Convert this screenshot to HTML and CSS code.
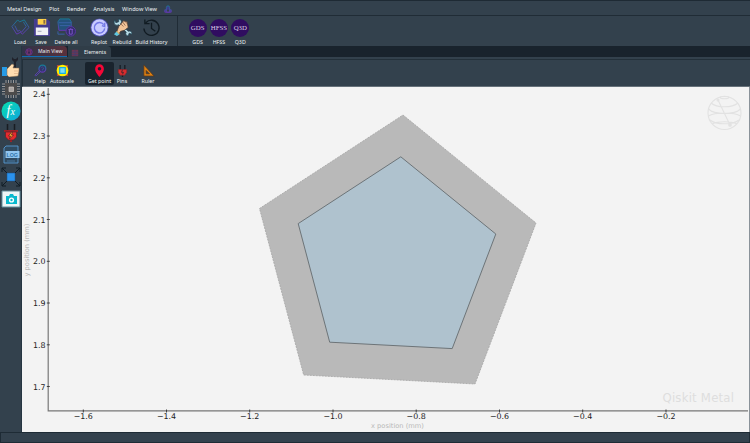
FILE: index.html
```html
<!DOCTYPE html>
<html lang="en">
<head>
<meta charset="utf-8">
<title>Qiskit Metal</title>
<link rel="stylesheet" href="styles.css">
</head>
<body>
<svg class="defs" width="0" height="0">
  <defs>
    <linearGradient id="cool" x1="0" y1="0" x2="0" y2="1"><stop offset="0" stop-color="#147d94"/><stop offset="1" stop-color="#6736b5"/></linearGradient>
    <linearGradient id="fx" x1="0" y1="0" x2="1" y2="1"><stop offset="0" stop-color="#06e0ac"/><stop offset="1" stop-color="#10a5df"/></linearGradient>
  </defs>
</svg>
<div class="app">
  <nav class="menubar">
    <span>Metal Design</span><span>Plot</span><span>Render</span><span>Analysis</span><span>Window View</span>
    <svg class="agent" viewBox="0 0 10 10"><path d="M3 6V3a2 2 0 0 1 4 0v3M1 9V6h2v3h4V6h2v3z" fill="#3d3d8c" stroke="url(#cool)"/></svg>
  </nav>
  <header class="toolbar">
    <div class="tool load"><svg viewBox="0 0 20 20"><path d="M1 9l6-7 2 2 5-2 5 8-7 7-2-2-4 2zM4 8l3 6 2-1 2 2 5-6-3-5" fill="none" stroke="url(#cool)"/></svg>Load</div>
    <div class="tool save"><svg viewBox="0 0 20 20"><path d="M2 1h14l3 3v15H2z" fill="#443c8f"/><path d="M6 1h9v6H6z" fill="#ffd24a"/><path d="M12 2h2v4h-2z" fill="#8a6c42"/><path d="M4 10h13v8H4z" fill="#f1f2f5"/><path d="M6 14h4" stroke="#9ea2b6"/></svg>Save</div>
    <div class="tool delete"><svg viewBox="0 0 20 20"><path d="M1 4l2-3h10l2 3v9H2z" fill="#24527c" stroke="url(#cool)"/><path d="M2 5h13M3 8h11M1 14v3h7" fill="none" stroke="#3a63a8"/><circle cx="14.500" cy="14" r="5" fill="#342e69" stroke="#5b37a5"/><path d="M12 12h5m-4 0v5h3v-5m-2-1h1" fill="none" stroke="#7d51ce"/></svg>Delete all</div>
    <div class="tool replot"><svg viewBox="0 0 20 20"><circle cx="10" cy="10" r="9.500" fill="#4e50b1"/><circle cx="10" cy="10" r="8.600" fill="#c9cbff"/><path d="M14.500 7A5.500 5.500 0 1 0 15.500 11M15.500 5v4l-3-1" fill="none" stroke="#7378e7" stroke-width="1.500"/></svg>Replot</div>
    <div class="tool rebuild"><svg viewBox="0 0 20 20"><path d="M2 2l1 3 3-1V1c4 1 3 4 2 5l8 8c3-1 4 1 4 3l-3-1-1 3c-3-1-3-3-2-4L6 7C2 9 0 5 2 2z" fill="#b9dce6" stroke="#163e50" stroke-width=".7"/><path d="M3 17l3-8 5-6 4 1 1 6-4 3-4 1-3 5z" fill="#f2c397" stroke="#4b3b35" stroke-width=".8"/><path d="M8 6l3 3m-1-5l3 4m-1-5l3 3" stroke="#704a39" stroke-width=".7"/><path d="M1 17l3-3 3 3-3 2z" fill="#5fc6df"/><path d="M4 14l3 3" stroke="#f0a432"/></svg>Rebuild</div>
    <div class="tool history"><svg viewBox="0 0 20 20"><path d="M4 5a8 8 0 1 1-2 6M3 1.500V6h5M10 5v6l4 3" fill="none" stroke="#111b22" stroke-width="1.400"/></svg>Build History</div>
    <i class="divider"></i>
    <div class="tool render"><b>GDS</b>GDS</div>
    <div class="tool render"><b>HFSS</b>HFSS</div>
    <div class="tool render"><b>Q3D</b>Q3D</div>
  </header>
  <main class="workspace">
    <aside class="sidebar">
      <svg viewBox="0 0 20 20"><path d="M13 10V5l-2-2V0l2 2h2l2-2v3l-2 2v6z" fill="#20222b"/><path d="M1 10h5v9H1z" fill="#269be7"/><path d="M6 12l5-5 2 1-1 3h6v3l-1 5-9 1-2-2z" fill="#ffddb0" stroke="#8b6b4d" stroke-width=".5"/><path d="M13 14h5m-5 2.500h4" stroke="#d29e76" stroke-width=".5"/></svg>
      <svg viewBox="0 0 20 20"><path d="M5 1v18M7.500 1v18M10 1v18M12.500 1v18M15 1v18M1 5h18M1 7.500h18M1 10h18M1 12.500h18M1 15h18" stroke="#9b9999" stroke-width="1"/><path d="M4 4h12v12H4z" fill="#4c4b4b"/><path d="M8 8h4.500v4.500H8z" fill="#a9a5a3" stroke="#d0c6c0" stroke-width=".7"/></svg>
      <svg viewBox="0 0 20 20"><circle cx="10" cy="10" r="9.500" fill="url(#fx)"/><text class="function" x="5.500" y="13.500">f<tspan class="variable">x</tspan></text></svg>
      <svg viewBox="0 0 20 20"><path d="M6.500 1v7M13.500 1v7" stroke="#191d23" stroke-width="1.500"/><path d="M3 8h14M10 16v3" stroke="#9c2228" stroke-width="2"/><path d="M4.500 9h11v5l-3 3h-5l-3-3z" fill="#e52a2e" stroke="#622028" stroke-width=".7"/><path d="M10.500 9l-3 4h2l-1 3 4-4h-2l1-3z" fill="#ffb02d" stroke="#4d2026" stroke-width=".7"/></svg>
      <svg viewBox="0 0 20 20"><path d="M5 1h12v17H3V3z" fill="#304b61" stroke="#579ad2" stroke-width=".9"/><path d="M4.500 6h14v7h-14z" fill="#91c5ef"/><path d="M6 16h8" stroke="#5189b8" stroke-width=".7"/><text class="log" x="5.500" y="11.500">LOG</text></svg>
      <svg viewBox="0 0 20 20"><path d="M1 1l18 18M19 1L1 19M1 5V1h4m10 0h4v4M1 15v4h4m10 0h4v-4" fill="none" stroke="#111c25" stroke-width="1"/><path d="M6 6h8v8H6z" fill="#2b92ec" stroke="#175391" stroke-width=".5"/></svg>
      <svg viewBox="0 0 20 20"><path d="M1 2h18v16H1z" fill="#ecf5f7" stroke="#628d9b"/><path d="M5 7h3l1-2h3l1 2h3v8H5z" fill="#08b9ce"/><circle cx="10.500" cy="11" r="2.600" fill="#fff"/><circle cx="10.500" cy="11" r="1.200" fill="#08b9ce"/></svg>
    </aside>
    <section class="content">
      <div class="tabs">
        <div class="tab active"><svg viewBox="0 0 10 10"><circle cx="5" cy="5" r="4" fill="#392553" stroke="#753898"/><path d="M3 3l2 1 2-1v4L5 8 3 7z" fill="none" stroke="#a34582" stroke-width=".7"/></svg>Main View</div>
        <div class="tab"><svg viewBox="0 0 10 10"><path d="M1 1h8v8H1z" fill="#6c3650"/><path d="M5 1v8M1 4h8M1 7h8" stroke="#443e72"/></svg>Elements</div>
      </div>
      <div class="plot-tools">
        <div class="tool help"><svg viewBox="0 0 14 14"><circle cx="9" cy="5" r="3.700" fill="#33346c" stroke="url(#cool)" stroke-width="1.300"/><path d="M7 8l-5 5-1-1 5-5" fill="none" stroke="#5b43b0"/><path d="M8 4q1-2 2 0T9 6v1" fill="none" stroke="#396a9c" stroke-width=".7"/></svg>Help</div>
        <div class="tool autoscale"><svg viewBox="0 0 14 14"><path d="M1 1h3v3H1zm9 0h3v3h-3zM1 10h3v3H1zm9 0h3v3h-3z" fill="#b5483c"/><circle cx="7" cy="7" r="6.300" fill="#ffef00"/><path d="M4 4h6v6H4z" fill="#7be1f4" stroke="#19aee1" stroke-width="1.300"/></svg>Autoscale</div>
        <div class="tool point"><svg viewBox="0 0 14 14"><path d="M7 14C3 9 2.300 7 2.300 5a4.700 4.700 0 0 1 9.400 0C11.700 7 11 9 7 14zM7 3.300a1.900 1.900 0 1 0 0 3.800 1.900 1.900 0 0 0 0-3.800z" fill="#f40737" fill-rule="evenodd"/></svg>Get point</div>
        <div class="tool pins"><svg viewBox="0 0 14 14"><path d="M4.500 1v5M9.500 1v5M7 11v3" stroke="#181d25" stroke-width="1.400"/><path d="M2.500 6h9v3l-2 3h-5l-2-3z" fill="#d92c2e" stroke="#85242a" stroke-width=".6"/><path d="M7 6L6 9h2l-1 2" fill="none" stroke="#45262d"/></svg>Pins</div>
        <div class="tool ruler"><svg viewBox="0 0 14 14"><path d="M2 1v12h11zM4.500 7v3.500h3.500z" fill="#df8010" stroke="#563a23" stroke-width=".9" fill-rule="evenodd"/></svg>Ruler</div>
      </div>
      <svg class="plot" viewBox="22 87 728 345">
        <path class="pocket" d="M403 115L536 223 475 384 303.700 375 259.500 208.500z"/>
        <path class="pad" d="M400.800 156.800L495.800 234 452.200 348.600 329.700 342.200 298.200 223.600z"/>
        <path class="axis" d="M48.200 88v322.800H748"/>
        <path class="ticks" d="M46.800 94.300h3M46.800 136h3M46.800 177.800h3M46.800 219.500h3M46.800 261.300h3M46.800 303h3M46.800 344.800h3M46.800 386.500h3M83.300 409.500v3M166.500 409.500v3M249.700 409.500v3M333 409.500v3M416.200 409.500v3M499.500 409.500v3M582.700 409.500v3M666 409.500v3"/>
        <g class="y-values"><text x="45.500" y="97.200">2.4</text><text x="45.500" y="138.900">2.3</text><text x="45.500" y="180.700">2.2</text><text x="45.500" y="222.500">2.1</text><text x="45.500" y="264.200">2.0</text><text x="45.500" y="306">1.9</text><text x="45.500" y="347.700">1.8</text><text x="45.500" y="389.500">1.7</text></g>
        <g class="x-values"><text x="83.300" y="419">−1.6</text><text x="166.500" y="419">−1.4</text><text x="249.700" y="419">−1.2</text><text x="333" y="419">−1.0</text><text x="416.200" y="419">−0.8</text><text x="499.500" y="419">−0.6</text><text x="582.700" y="419">−0.4</text><text x="666" y="419">−0.2</text></g>
        <text class="label" x="397.500" y="428">x position (mm)</text>
        <text class="label" transform="translate(29.200 250) rotate(-90)">y position (mm)</text>
        <text class="watermark" x="662.500" y="402.300" textLength="71.500">Qiskit Metal</text>
        <g class="globe"><circle cx="724.500" cy="113" r="16.500"/><ellipse cx="724.500" cy="97.500" rx="4.500" ry="1.200"/><path d="M711 103c6 5 21 5 27 0M708.500 109c6 6 26 6 32 0M708.500 116c6-4 26-4 32 0M710 120c6 5 23 5 29 0M712 124c6-3 19-3 25 0M718 100l12 25"/><circle class="dot" cx="718" cy="100" r="1"/><circle class="dot" cx="730" cy="125" r="1.300"/></g>
        <path class="edge" d="M749.500 87v345"/>
      </svg>
    </section>
  </main>
  <footer class="status"></footer>
</div>
</body>
</html>
```
FILE: styles.css
```css
* { box-sizing: border-box; }
body { margin: 0; background: #33414d; font: 5.6px/7px "Noto Sans", sans-serif; color: #eef2f4; }
.defs { position: absolute; }
.app { width: 750px; height: 443px; display: grid; grid-template-rows: 15px 31px 386px 11px; overflow: hidden; }
.menubar { display: flex; align-items: center; gap: 7.5px; padding: 2px 7px 0; border-top: 1px solid #1e2a34; white-space: nowrap; }
.agent { width: 8px; height: 8px; }
.toolbar { display: flex; padding: 2px 0 0 10px; border-top: 1px solid #202c36; }
.tool { display: flex; flex-direction: column; align-items: center; flex: none; font-size: 5.3px; line-height: 7px; white-space: nowrap; }
.toolbar .tool svg { width: 19px; height: 19px; margin-bottom: 1.5px; }
.load { width: 20px; }
.save { width: 22px; }
.delete { width: 28px; }
.replot { width: 22px; margin-left: 8px; }
.rebuild { width: 24px; }
.history { width: 35px; }
.divider { width: 1px; margin: -2px 9px 0 8px; background: #202c36; }
.render { width: 21.3px; }
.render b { width: 18px; height: 18px; margin: .5px 0 2px; border-radius: 50%; background: #300d60; color: #ddd2e4; font: 6.8px/18px "Liberation Serif", serif; text-align: center; }
.workspace { display: grid; grid-template-columns: 22px 728px; min-height: 0; }
.sidebar { display: flex; flex-direction: column; align-items: center; gap: 2px; padding-top: 11px; border-right: 1px solid #263541; }
.sidebar svg { width: 20px; height: 20px; flex: none; }
.function { font: italic 14px "Liberation Serif", serif; fill: #fff; }
.variable { font-size: 10px; }
.log { font: bold 5.3px "Liberation Sans", sans-serif; fill: #3175ac; }
.content { display: grid; grid-template-rows: 13px 28px 345px; min-width: 0; }
.tabs { display: flex; background: #19232d; border-bottom: 2px solid #33414d; }
.tab { width: 43px; height: 11px; margin-left: 1px; padding: 2px 3px 0; display: flex; align-items: center; gap: 5px; background: #303d48; border-radius: 0 4px 0 0; font-size: 5.1px; white-space: nowrap; }
.tab:first-child { width: 45px; margin-left: 0; padding-top: 1px; border-bottom: 1px solid #126cb1; background: linear-gradient(90deg, #303448, #59303c); }
.tab svg { width: 8px; height: 8px; flex: none; }
.plot-tools { display: flex; padding-left: 9px; border-top: 1px solid #23303a; border-bottom: 1px solid #66717a; border-left: 1px solid #23303a; }
.plot-tools .tool { padding-top: 4px; }
.plot-tools svg { width: 13px; height: 13px; margin-bottom: .7px; }
.help { width: 16px; }
.autoscale { width: 28px; }
.point { width: 29px; margin-left: 9px; margin-top: 2px; height: 23px; background: #19232d; border-radius: 2px; }
.plot-tools .point { padding-top: 2px; }
.pins { width: 16px; }
.ruler { width: 18px; margin-left: 9px; }
.plot { width: 728px; height: 345px; background: #f3f3f3; font-family: "DejaVu Sans", sans-serif; }
.pocket { fill: #b9b9b9; stroke: #a5a5a5; stroke-width: .8; stroke-dasharray: 2 1; }
.pad { fill: #afc2ce; stroke: #6d7478; stroke-width: 1; }
.axis { fill: none; stroke: #777; stroke-width: 1.2; }
.ticks { stroke: #333; stroke-width: .9; }
.edge { stroke: #8a9299; }
.y-values, .x-values { font-size: 7.9px; fill: #222; }
.y-values { text-anchor: end; }
.x-values { text-anchor: middle; }
.label { font-size: 6.7px; fill: #b8b8b8; text-anchor: middle; }
.watermark { font-size: 11.7px; fill: #dedede; }
.globe { fill: none; stroke: #e2e2e2; stroke-width: 1.1; }
.globe .dot { fill: #e2e2e2; }
.status { border: 1px solid #1e2b35; }
```
